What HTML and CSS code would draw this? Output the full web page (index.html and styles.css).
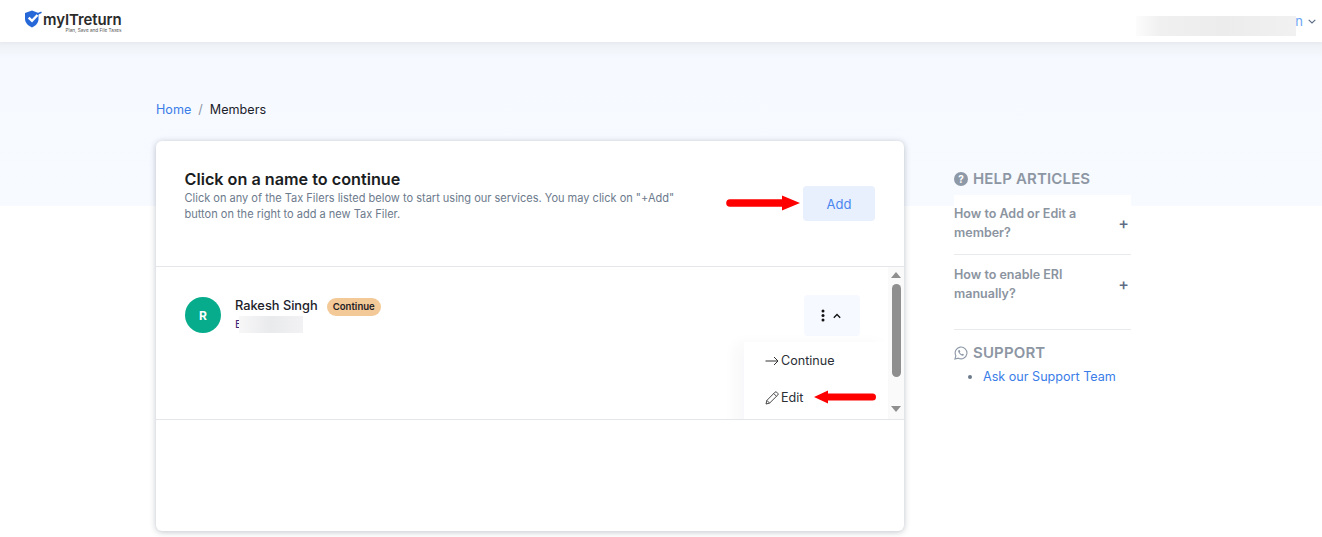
FILE: index.html
```html
<!DOCTYPE html>
<html lang="en">
<head>
<meta charset="utf-8">
<title>Members - myITreturn</title>
<link rel="stylesheet" href="styles.css">
</head>
<body>
<header class="topbar">
  <div class="logo">
    <svg class="logo-mark" width="18" height="18" viewBox="0 0 18 18"><path d="M8 .5 L14.500 3 V9 C14.500 13 11.500 16 8 17.500 C4.500 16 1 13 1 9 V3 Z" fill="#2668d8"/><path d="M4.700 7.600 L8 10.800 L13.500 5" fill="none" stroke="#fff" stroke-width="2.400"/><path d="M13 4.200 L17.500 2.200" stroke="#2668d8" stroke-width="1.600"/></svg>
    <div class="logo-text">
      <span class="logo-name">myITreturn</span>
      <span class="logo-tag">Plan, Save and File Taxes</span>
    </div>
  </div>
  <div class="account">
    <span class="account-name">n</span>
    <svg width="8" height="5" viewBox="0 0 8 5"><path d="M.7.8 4 4 7.3.8" fill="none" stroke="#5a6b85" stroke-width="1.1"/></svg>
    <span class="redact redact-account"></span>
  </div>
</header>

<div class="page">
  <nav class="crumbs">
    <a class="crumb-link">Home</a><span class="crumb-sep">/</span><span class="crumb-current">Members</span>
  </nav>
  <div class="columns">
    <main class="card">
      <section class="card-head">
        <div class="head-text">
          <h1>Click on a name to continue</h1>
          <p>Click on any of the Tax Filers listed below to start using our services. You may click on "+Add" button on the right to add a new Tax Filer.</p>
        </div>
        <button class="btn-add">Add</button>
        <svg class="arrow arrow-add" width="75" height="16" viewBox="0 0 75 16"><path d="M4 4.200 H56 V0.500 L74 8 L56 15.500 V11.800 H4 A3.800 3.800 0 0 1 4 4.200 Z" fill="#fe0000"/></svg>
      </section>
      <section class="list">
        <div class="list-body">
          <div class="member">
            <div class="avatar">R</div>
            <div class="member-info">
              <div class="member-line"><span class="member-name">Rakesh Singh</span><span class="badge">Continue</span></div>
              <div class="member-sub">E<span class="redact redact-sub"></span></div>
            </div>
            <button class="kebab">
              <svg width="4" height="13" viewBox="0 0 4 13"><circle cx="2" cy="2" r="1.500" fill="#111"/><circle cx="2" cy="6.500" r="1.500" fill="#111"/><circle cx="2" cy="11" r="1.500" fill="#111"/></svg>
              <svg width="8" height="6" viewBox="0 0 8 6"><path d="M.8 4.800 4 1.500l3.200 3.300" fill="none" stroke="#111" stroke-width="1.300"/></svg>
            </button>
          </div>
          <div class="menu">
            <div class="menu-item">
              <svg width="14" height="10" viewBox="0 0 14 10"><path d="M.5 5H13M9 1l4 4-4 4" fill="none" stroke="#333" stroke-width="1"/></svg>
              <span>Continue</span>
            </div>
            <div class="menu-item">
              <svg width="14" height="14" viewBox="0 0 14 14"><path d="M1 13l.9-3.600L10 1.200a1.200 1.200 0 0 1 1.700 0l1.100 1.100a1.200 1.200 0 0 1 0 1.700L4.600 12.100zM1.900 9.400l2.700 2.700M8.800 2.600l2.600 2.600" fill="none" stroke="#333" stroke-width=".9"/></svg>
              <span>Edit</span>
              <svg class="arrow arrow-edit" width="62" height="14" viewBox="0 0 62 14"><path d="M0 7 L14 .5 V3.500 H58.500 A3.500 3.500 0 0 1 58.500 10.500 H14 V13.500 Z" fill="#fe0000"/></svg>
            </div>
          </div>
        </div>
        <div class="scrollbar">
          <svg width="10" height="6" viewBox="0 0 10 6"><path d="M5 0l5 6H0z" fill="#8f8f8f"/></svg>
          <div class="thumb"></div>
          <svg width="10" height="6" viewBox="0 0 10 6"><path d="M5 6l5-6H0z" fill="#8f8f8f"/></svg>
        </div>
      </section>
    </main>

    <aside class="side">
      <h2 class="side-title">
        <svg width="14" height="14" viewBox="0 0 14 14"><circle cx="7" cy="7" r="7" fill="#8e99a8"/><text x="7" y="10.600" text-anchor="middle" class="q">?</text></svg>
        HELP ARTICLES
      </h2>
      <div class="articles">
        <div class="article"><span>How to Add or Edit a member?</span><span class="plus">+</span></div>
        <div class="article"><span>How to enable ERI manually?</span><span class="plus">+</span></div>
      </div>
      <h2 class="side-title side-support">
        <svg width="14" height="14" viewBox="0 0 15 15"><path d="M1 14l1-3.600A6.300 6.300 0 1 1 4.600 13z" fill="none" stroke="#8e99a8" stroke-width="1.200"/><path d="M5 4.400c-.8.8-.7 2 .5 3.500s2.700 2.700 4 2.500c.7-.1 1.200-.7 1.200-1.300l-1.600-.9-.7.700c-.9-.3-1.800-1.200-2.200-2.200l.6-.7-.8-1.700z" fill="#8e99a8"/></svg>
        SUPPORT
      </h2>
      <ul class="support-list"><li><a>Ask our Support Team</a></li></ul>
    </aside>
  </div>
</div>
</body>
</html>
```
FILE: styles.css
```css
* { box-sizing: border-box; }
html, body { margin: 0; padding: 0; }
body {
  font-family: Inter, "Liberation Sans", sans-serif;
  color: #161c24;
  background: #fff;
  height: 537px;
  overflow: hidden;
}
.topbar {
  height: 42px;
  background: #fff;
  display: flex;
  align-items: center;
  justify-content: space-between;
  padding: 0 6px 0 24px;
  box-shadow: 0 1px 3px rgba(60, 70, 90, .06);
  position: relative;
  z-index: 2;
}
.logo { display: flex; align-items: flex-start; gap: 1px; margin-top: 2px; }
.logo-mark { margin-top: -1px; }
.logo-text { display: flex; flex-direction: column; align-items: flex-end; }
.logo-name { font-size: 15px; font-weight: 600; color: #2b2b2b; line-height: 18px; letter-spacing: -.1px; }
.logo-tag { font-size: 4.7px; color: #555; line-height: 6px; margin-top: -1.5px; }
.account { display: flex; align-items: center; gap: 5px; position: relative; }
.account-name { font-size: 13px; color: #6aa5f2; }
.redact { position: absolute; display: block; }
.redact-account {
  width: 160px; height: 20px; right: 20px; top: 3px;
  background: linear-gradient(90deg, #fcfcfc, #f0f0f0 15%, #ececed 55%, #f1f1f2);
}
.page {
  padding: 0 0 0 156px;
  height: 495px;
  background: linear-gradient(#edf0f5 0, #f6f9ff 18px, #f7faff 164px, #fff 164px);
}
.crumbs { padding-top: 60px; height: 99px; font-size: 12.6px; line-height: 16px; }
.crumb-link { color: #3a7de8; }
.crumb-sep { color: #8a94a3; margin: 0 7px; }
.crumb-current { color: #1c222b; }
.columns { display: flex; gap: 50px; align-items: flex-start; }
.card {
  width: 748px;
  height: 390px;
  background: #fff;
  border-radius: 6px;
  box-shadow: 0 1px 6px rgba(30, 40, 60, .28);
}
.card-head {
  position: relative;
  height: 126px;
  padding: 29px 29px 0 28.5px;
  display: flex;
  justify-content: space-between;
  align-items: flex-start;
  border-bottom: 1px solid #e4e6ea;
}
.head-text { width: 510px; }
.card-head h1 { margin: 0; font-size: 16.2px; font-weight: 600; line-height: 18px; color: #1a1d22; }
.card-head p { margin: 2px 0 0; font-size: 11.02px; line-height: 16px; color: #6c7a8c; }
.btn-add {
  width: 72px; height: 35px; margin-top: 16px;
  border: 0; border-radius: 4px;
  background: #e8f0fd; color: #4a86f0;
  font: 400 13px Inter, sans-serif;
}
.arrow { position: absolute; }
.arrow-add { left: 570px; top: 54px; }
.list {
  display: flex;
  height: 153px;
  border-bottom: 1px solid #e4e6ea;
  overflow: hidden;
}
.list-body { flex: 1; position: relative; }
.member { display: flex; align-items: flex-start; padding: 30px 28px 0 29px; }
.avatar {
  width: 36px; height: 36px; border-radius: 50%;
  background: #07ac8c; color: #fff;
  display: flex; align-items: center; justify-content: center;
  font-size: 12px; font-weight: 700;
}
.member-info { flex: 1; padding-left: 14px; margin-top: -1px; }
.member-line { display: flex; align-items: center; gap: 9px; height: 19px; }
.member-name { font-size: 12.8px; font-weight: 500; color: #1d222a; }
.badge {
  font-size: 9.6px; font-weight: 600; line-height: 18px;
  background: #f3c998; color: #1e2024;
  border-radius: 9px; padding: 0 6px;
  margin-top: 3px;
}
.member-sub { font-size: 11px; color: #3f2a78; line-height: 17px; margin-top: 1px; position: relative; }
.redact-sub {
  left: 4px; top: 0; width: 64px; height: 17px;
  background: linear-gradient(90deg, #f7f7f8, #e9eaec 50%, #f2f2f4);
}
.kebab {
  width: 56px; height: 41px; margin-top: -2px;
  border: 0; border-radius: 4px;
  background: #f6f9ff;
  display: flex; align-items: center; justify-content: center; gap: 8px;
  padding: 0 2px 0 0;
}
.menu {
  position: absolute;
  left: 588px; top: 75px;
  width: 144px; height: 90px;
  background: #fff;
  box-shadow: -8px 2px 14px rgba(40, 60, 100, .04);
}
.menu-item {
  display: flex; align-items: center; gap: 2px;
  height: 37px;
  padding-left: 21px;
  font-size: 12.6px;
  color: #2b2f36;
  position: relative;
}
.arrow-edit { left: 70px; top: 11px; }
.scrollbar {
  width: 16px;
  background: #fafafa;
  display: flex; flex-direction: column; align-items: center;
  padding-top: 5px;
}
.thumb { width: 9px; height: 93px; border-radius: 5px; background: #8f8f8f; margin: 6px 0 29px; }
.side { width: 177px; padding-top: 29px; }
.side-title {
  display: flex; align-items: center; gap: 5px;
  margin: 0;
  font-size: 15px; font-weight: 600; line-height: 18px;
  letter-spacing: .15px;
  color: #8d96a3;
}
.q { font: 700 10px Inter, sans-serif; fill: #fff; }
.articles { background: #fff; margin-top: 7px; padding-bottom: 2px; }
.article {
  display: flex; justify-content: space-between; align-items: center;
  padding: 9px 2px 12px 0;
  font-size: 12.5px; font-weight: 600; line-height: 19px;
  color: #8b949f;
}
.article + .article { border-top: 1px solid #e9eaec; padding: 10px 2px 24px 0; }
.article > span:first-child { width: 140px; }
.plus { font-size: 16px; line-height: 16px; color: #606c85; font-weight: 500; margin-top: -1px; }
.side-support { border-top: 1px solid #e9eaec; padding-top: 14px; height: 18px; box-sizing: content-box; }
.support-list { margin: 5px 0 0; padding-left: 29px; font-size: 12.6px; line-height: 20px; color: #6c7a8c; }
.support-list a { color: #3a7de8; }
```
